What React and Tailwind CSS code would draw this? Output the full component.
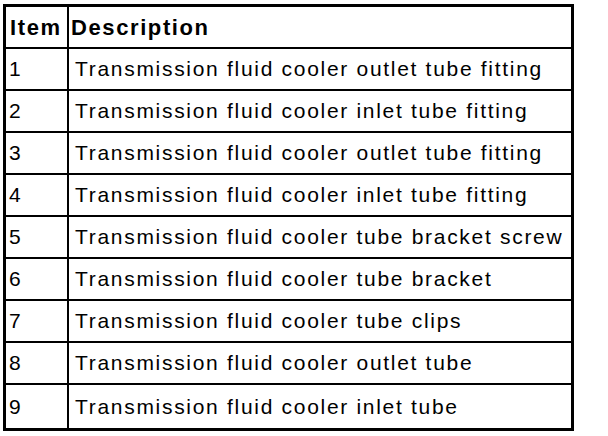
import React from 'react';

const rows = [
    { item: '1', desc: 'Transmission fluid cooler outlet tube fitting' },
    { item: '2', desc: 'Transmission fluid cooler inlet tube fitting' },
    { item: '3', desc: 'Transmission fluid cooler outlet tube fitting' },
    { item: '4', desc: 'Transmission fluid cooler inlet tube fitting' },
    { item: '5', desc: 'Transmission fluid cooler tube bracket screw' },
    { item: '6', desc: 'Transmission fluid cooler tube bracket' },
    { item: '7', desc: 'Transmission fluid cooler tube clips' },
    { item: '8', desc: 'Transmission fluid cooler outlet tube' },
    { item: '9', desc: 'Transmission fluid cooler inlet tube' },
];

const App = () => {
    return (
        <div className="w-[608px] h-[436px] bg-white pt-[4px] pl-[3px]" style={{ fontFamily: '"Liberation Sans", Arial, sans-serif' }}>
            <div className="w-[571px] h-[427px] border-[3px] border-black flex flex-col text-black">
                {/* header */}
                <div className="flex h-[40px] shrink-0 font-bold text-[22px] tracking-[1.6px]">
                    <div className="w-[61px] flex items-center pl-[4px]">Item</div>
                    <div className="flex-1 flex items-center pl-[2px] border-l-2 border-black">Description</div>
                </div>
                {rows.map((row, i) => (
                    <div
                        key={row.item}
                        className={`flex border-t-2 border-black text-[21px] tracking-[1.7px] ${i === rows.length - 1 ? 'flex-1' : 'h-[42px] shrink-0'}`}
                    >
                        <div className="w-[61px] flex items-center pl-[3px]">{row.item}</div>
                        <div className="flex-1 flex items-center pl-[6px] border-l-2 border-black whitespace-nowrap">{row.desc}</div>
                    </div>
                ))}
            </div>
        </div>
    );
};

export default App;
